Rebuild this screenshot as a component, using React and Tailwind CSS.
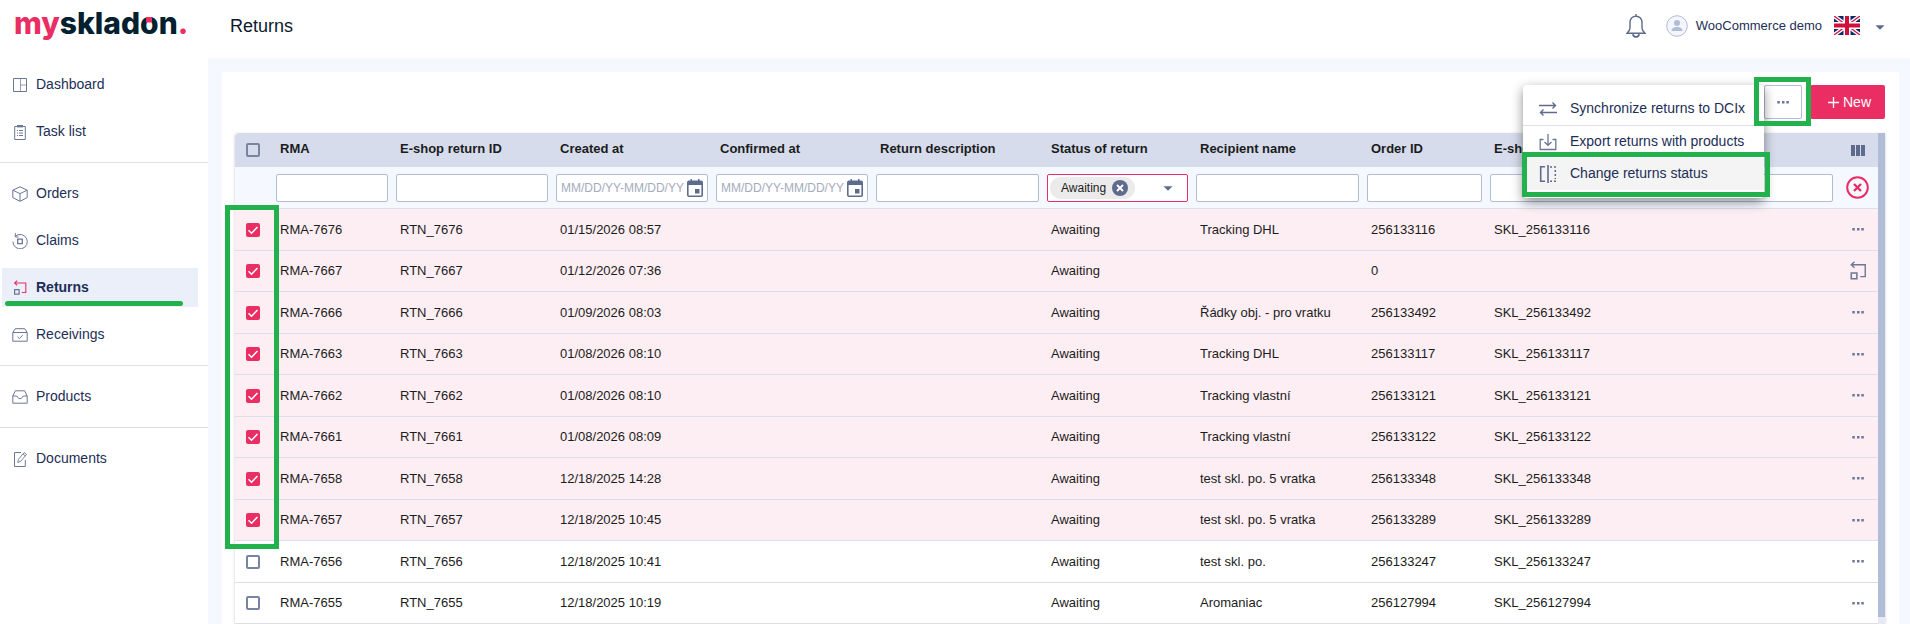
import React, { useState } from "react";

const ROWS = [
  { id: 7676, created: "01/15/2026 08:57", recipient: "Tracking DHL", order: "256133116", eshop: "SKL_256133116" },
  { id: 7667, created: "01/12/2026 07:36", recipient: "", order: "0", eshop: "", action: "return" },
  { id: 7666, created: "01/09/2026 08:03", recipient: "Řádky obj. - pro vratku", order: "256133492", eshop: "SKL_256133492" },
  { id: 7663, created: "01/08/2026 08:10", recipient: "Tracking DHL", order: "256133117", eshop: "SKL_256133117" },
  { id: 7662, created: "01/08/2026 08:10", recipient: "Tracking vlastní", order: "256133121", eshop: "SKL_256133121" },
  { id: 7661, created: "01/08/2026 08:09", recipient: "Tracking vlastní", order: "256133122", eshop: "SKL_256133122" },
  { id: 7658, created: "12/18/2025 14:28", recipient: "test skl. po. 5 vratka", order: "256133348", eshop: "SKL_256133348" },
  { id: 7657, created: "12/18/2025 10:45", recipient: "test skl. po. 5 vratka", order: "256133289", eshop: "SKL_256133289" },
  { id: 7656, created: "12/18/2025 10:41", recipient: "test skl. po.", order: "256133247", eshop: "SKL_256133247" },
  { id: 7655, created: "12/18/2025 10:19", recipient: "Aromaniac", order: "256127994", eshop: "SKL_256127994" },
];

const HEADERS = [
  "RMA",
  "E-shop return ID",
  "Created at",
  "Confirmed at",
  "Return description",
  "Status of return",
  "Recipient name",
  "Order ID",
  "E-shop order ID",
];

const Svg = ({ size = 16, className = "", children, ...rest }) => (
  <svg
    width={size}
    height={size}
    viewBox={`0 0 ${size} ${size}`}
    fill="none"
    stroke="currentColor"
    aria-hidden="true"
    className={`shrink-0 ${className}`}
    {...rest}
  >
    {children}
  </svg>
);

const DashboardIcon = () => (
  <Svg>
    <path d="M1.5 1.5h13v13h-13z" />
    <path d="M8.5 1.5v13M8.5 8h6" opacity=".7" />
  </Svg>
);

const TaskIcon = () => (
  <Svg>
    <path d="M2.7 2.5h10.6v13H2.7z" />
    <path d="M5 2.2h6" strokeWidth="2.4" />
    <path d="M5 6.5h1M7 6.5h4M5 9h1M7 9h4M5 11.5h1M7 11.5h4" />
  </Svg>
);

const OrdersIcon = () => (
  <Svg>
    <path d="M8 .8l7.2 3.4v7.4L8 15.3.8 11.6V4.2L8 .8z" strokeLinejoin="round" />
    <path d="M.8 4.2L8 7.6l7.2-3.4M8 7.6v7.7" />
  </Svg>
);

const ClaimsIcon = () => (
  <Svg>
    <path d="M3.2 3.4A7.2 7.2 0 1 1 .9 8.6" />
    <path d="M3.6.2l-.5 3.5 3.5.4" />
    <path d="M5.7 6.2h4.6v4.5H5.7z" strokeWidth="1.3" />
  </Svg>
);

const ReturnIcon = ({ size = 16, accent = "currentColor" }) => (
  <svg width={size} height={size} viewBox="0 0 16 16" fill="none" stroke="currentColor" aria-hidden="true" className="shrink-0">
    <path d="M5.2.6L2.6 3l2.6 2.4M2.8 3h11v9.5h-4" stroke={accent} strokeWidth="1.1" />
    <path d="M2.6 9.6h4.5v4.5H2.6z" strokeWidth="1.2" />
  </svg>
);

const ReceivingsIcon = () => (
  <Svg>
    <path d="M.8 5.5h14.4v8.7H.8zM.8 5.5l2.4-3.8h9.6l2.4 3.8" strokeLinejoin="round" />
    <path d="M5.5 9.7l2 1.8 3.2-3.3" />
  </Svg>
);

const ProductsIcon = () => (
  <Svg>
    <path d="M.8 7l2.6-5.2h9.2L15.2 7v7.2H.8V7z" strokeLinejoin="round" />
    <path d="M.8 7h3.4c1 0 1.3.6 1.6 1.4.4.8 1 1.3 2.2 1.3s1.800-.5 2.200-1.300c.3-.8.6-1.400 1.600-1.400h3.400" />
  </Svg>
);

const DocumentsIcon = () => (
  <Svg>
    <path d="M9 1.5H2.5v14h10.800V9" />
    <path d="M6.5 8.2l5.600-6.700 2.400 1.900-5.700 6.800-3.100 1.300.8-3.300zM11 3l2.300 1.900" strokeWidth=".9" />
  </Svg>
);

const DotsIcon = () => (
  <svg width="12" height="3" viewBox="0 0 12 3" fill="#6c7796" aria-hidden="true">
    <rect x=".3" y="0" width="2.5" height="2.5" />
    <rect x="5" y="0" width="2.5" height="2.5" />
    <rect x="9.3" y="0" width="2.5" height="2.5" />
  </svg>
);

const CaretIcon = ({ className = "" }) => (
  <svg width="10" height="5" viewBox="0 0 10 5" fill="#5f6b8c" aria-hidden="true" className={className}>
    <path d="M.5.2h9L5 4.8z" />
  </svg>
);

const CalendarIcon = () => (
  <svg width="16" height="18" viewBox="0 0 16 18" aria-hidden="true">
    <path
      d="M2 1.5h1.5V0H5v1.5h6V0h1.5v1.5H14a2 2 0 0 1 2 2V16a2 2 0 0 1-2 2H2a2 2 0 0 1-2-2V3.5a2 2 0 0 1 2-2zM1.6 6v10.4h12.8V6zM8 10h4.5v4.5H8z"
      fill="#5f6b8c"
      fillRule="evenodd"
    />
  </svg>
);

const FlagIcon = () => (
  <svg width="26" height="19" viewBox="0 0 26 19" aria-hidden="true">
    <path fill="#0a2a6c" d="M0 0h26v19H0z" />
    <path d="M0 0l26 19M26 0L0 19" stroke="#fff" strokeWidth="4" />
    <path d="M0 0l26 19M26 0L0 19" stroke="#d0103a" strokeWidth="1.3" />
    <path d="M13 0v19M0 9.5h26" stroke="#fff" strokeWidth="7" />
    <path d="M13 0v19M0 9.5h26" stroke="#d0103a" strokeWidth="4" />
  </svg>
);

const Logo = () => (
  <svg width="180" height="44" viewBox="0 0 180 44" role="img" aria-label="myskladon">
    <text x="0" y="34" fontFamily="Inter, sans-serif" fontWeight="800" fontSize="30" fill="#03202f">
      <tspan fill="#ea2e63">my</tspan>skladon<tspan fill="#ea2e63">.</tspan>
    </text>
    <path d="M132 17h6v5.5h-6z" fill="#ea2e63" />
  </svg>
);

const MENU_GROUPS = [
  [
    { label: "Dashboard", Icon: DashboardIcon },
    { label: "Task list", Icon: TaskIcon },
  ],
  [
    { label: "Orders", Icon: OrdersIcon },
    { label: "Claims", Icon: ClaimsIcon },
    { label: "Returns", Icon: () => <ReturnIcon accent="#ea2e63" />, active: true },
    { label: "Receivings", Icon: ReceivingsIcon },
  ],
  [{ label: "Products", Icon: ProductsIcon }],
  [{ label: "Documents", Icon: DocumentsIcon }],
];

const Sidebar = () => (
  <aside className="w-52 shrink-0">
    <a href="#" className="block h-[58px] pl-[14px]">
      <Logo />
    </a>
    <nav className="-mt-1">
      {MENU_GROUPS.map((group, i) => (
        <ul key={i} className="flex flex-col gap-2 py-[11px] border-b border-[#dcdfe3] last:border-b-0">
          {group.map(({ label, Icon, active }) => (
            <li key={label} className="relative ml-[2px] mr-[10px]">
              <a
                href="#"
                className={`flex items-center gap-2 h-[39px] pl-[10px] text-sm text-[#1d2e57] ${
                  active ? "bg-[#ebeff9] font-bold" : ""
                }`}
              >
                <span className="text-[#6c7796]">
                  <Icon />
                </span>
                <span className="pb-[2px]">{label}</span>
              </a>
              {active && (
                <span className="absolute left-[3px] right-[15px] bottom-px h-[5px] rounded-full bg-[#22b14c]" />
              )}
            </li>
          ))}
        </ul>
      ))}
    </nav>
  </aside>
);

const TopBar = () => (
  <header className="flex items-center justify-between h-[58px] pb-[7px] pl-[22px] pr-[25px] shrink-0">
    <h1 className="text-lg text-[#0b1a2e]">Returns</h1>
    <div className="flex items-center">
      <button type="button" aria-label="Notifications" className="mr-5 text-[#5f6b8c]">
        <svg width="20" height="24" viewBox="0 0 20 24" fill="none" stroke="currentColor" strokeWidth="1.4" aria-hidden="true">
          <path d="M10 2.2c-3.8 0-6 2.8-6 6.3v5.6c0 1.8-1.3 3.6-3 5.2h18c-1.7-1.6-3-3.4-3-5.2V8.5c0-3.5-2.2-6.3-6-6.3zM10 0v2.2" />
          <path d="M6.8 20.2c.5 1.8 1.6 2.7 3.2 2.7s2.7-.9 3.2-2.7" strokeWidth="1.8" />
        </svg>
      </button>
      <svg width="22" height="22" viewBox="0 0 22 22" aria-hidden="true">
        <circle cx="11" cy="11" r="10.3" fill="#f4f6fb" stroke="#b1bdd7" />
        <circle cx="11" cy="8" r="3" fill="#b1bdd7" />
        <path d="M5.5 16c0-2.7 2.6-4 5.5-4s5.5 1.3 5.5 4z" fill="#b1bdd7" />
      </svg>
      <span className="ml-2 text-[13px] text-[#1d2e57]">WooCommerce demo</span>
      <button type="button" aria-label="Language" className="flex items-center gap-[15px] ml-3">
        <FlagIcon />
        <CaretIcon className="mt-1" />
      </button>
    </div>
  </header>
);

const ActionMenu = () => (
  <ul className="absolute right-full top-0 z-20 w-[241px] py-2 rounded-sm bg-white text-sm text-[#1d2e57] shadow-[0_4px_12px_rgba(0,0,0,0.45)]">
    <li className="border-b border-[#dcdfe3]">
      <button type="button" className="flex items-center w-full h-8 pl-4 gap-[13px] whitespace-nowrap">
        <Svg size={18} className="text-[#5f6b8c]">
          <path d="M0 5.5h16.5M13.5 2.5l3 3-3 3M18 12.5H1.5M4.5 9.5l-3 3 3 3" strokeWidth="1.4" />
        </Svg>
        <span className="pb-[2px]">Synchronize returns to DCIx</span>
      </button>
    </li>
    <li>
      <button type="button" className="flex items-center w-full h-8 pl-4 gap-[13px] whitespace-nowrap">
        <Svg size={18} className="text-[#6c7796]">
          <path d="M4.5 6.5H1.2v10h15.6v-10h-3.3M9 1v11M5.5 9L9 12.3 12.5 9" strokeWidth="1.3" />
        </Svg>
        <span className="pb-[2px]">Export returns with products</span>
      </button>
    </li>
    <li className="relative">
      <button type="button" className="flex items-center w-full h-8 pl-4 gap-[13px] whitespace-nowrap bg-[#f4f4f4]">
        <Svg size={18} className="text-[#5f6b8c]">
          <path d="M6 1.7H1.7v14.6H6" strokeWidth="1.6" />
          <path d="M9 0v18" strokeWidth="1.6" />
          <path d="M11 2h6M16.3 5v9M11 16.3h6" strokeWidth="1.5" strokeDasharray="2 2" />
        </Svg>
        <span className="pb-[2px]">Change returns status</span>
      </button>
      <span className="absolute -left-px -right-[6px] -top-[6px] h-[45px] border-5 border-[#22b14c] pointer-events-none" />
    </li>
  </ul>
);

const Checkbox = ({ label, checked, onChange }) => (
  <label className="grid w-[14px] h-[14px] ml-[11px]">
    <input
      type="checkbox"
      aria-label={label}
      checked={checked}
      onChange={onChange}
      className="peer col-start-1 row-start-1 appearance-none w-[14px] h-[14px] rounded-[2px] border-2 border-[#7984a2] checked:border-[#ea2e63] checked:bg-[#ea2e63]"
    />
    <svg
      viewBox="0 0 14 14"
      fill="none"
      stroke="#fff"
      strokeWidth="1.5"
      aria-hidden="true"
      className="col-start-1 row-start-1 w-[14px] h-[14px] invisible peer-checked:visible pointer-events-none"
    >
      <path d="M2.5 7.2l3 3 6-6.2" />
    </svg>
  </label>
);

const TextFilter = ({ label }) => (
  <input
    type="text"
    aria-label={label}
    className="block w-full h-7 px-1 rounded-[2px] border border-[#b1bdd7] bg-white"
  />
);

const DateFilter = ({ label }) => (
  <div className="flex items-center h-7 pr-1 rounded-[2px] border border-[#b1bdd7] bg-white">
    <input
      type="text"
      aria-label={label}
      placeholder="MM/DD/YY-MM/DD/YY"
      className="min-w-0 flex-1 pl-1 text-xs placeholder:text-[#a3abbe] outline-none"
    />
    <button type="button" aria-label={`${label} calendar`}>
      <CalendarIcon />
    </button>
  </div>
);

const StatusFilter = () => (
  <div className="flex items-center h-7 pl-[2px] rounded-[2px] border border-[#ea2e63] bg-white">
    <span className="flex items-center gap-[6px] h-[22px] pl-[11px] pr-[7px] rounded-full bg-[#ebebeb] text-xs">
      Awaiting
      <button type="button" aria-label="Remove Awaiting">
        <svg width="16" height="16" viewBox="0 0 16 16" aria-hidden="true">
          <circle cx="8" cy="8" r="8" fill="#5f6b8c" />
          <path d="M5 5l6 6M11 5l-6 6" stroke="#fff" strokeWidth="1.8" />
        </svg>
      </button>
    </span>
    <span className="relative flex-1 min-w-0">
      <select aria-label="Status of return" className="block w-full h-6 appearance-none outline-none">
        <option value=""></option>
      </select>
      <CaretIcon className="absolute right-[14px] top-[10px] pointer-events-none" />
    </span>
  </div>
);

const ReturnsTable = () => {
  const [selected, setSelected] = useState([7676, 7667, 7666, 7663, 7662, 7661, 7658, 7657]);

  const toggle = (id) =>
    setSelected((prev) => (prev.includes(id) ? prev.filter((x) => x !== id) : [...prev, id]));

  const allSelected = selected.length === ROWS.length;

  return (
    <div className="relative flex shadow-[0_1px_3px_rgba(0,0,0,0.2)]">
      <div className="flex-1 min-w-0">
        <table className="w-full table-fixed border-separate border-spacing-0 text-[13px] text-[#1b1c20]">
          <colgroup>
            <col className="w-[37px]" />
            <col className="w-[120px]" />
            <col className="w-[160px]" />
            <col className="w-[160px]" />
            <col className="w-[160px]" />
            <col className="w-[171px]" />
            <col className="w-[149px]" />
            <col className="w-[171px]" />
            <col className="w-[123px]" />
            <col />
            <col className="w-[41px]" />
          </colgroup>
          <thead>
            <tr className="h-[34px] [&>th]:bg-[#d6dceb]">
              <th className="rounded-tl">
                <Checkbox
                  label="Select all"
                  checked={allSelected}
                  onChange={() => setSelected(allSelected ? [] : ROWS.map((r) => r.id))}
                />
              </th>
              {HEADERS.map((h) => (
                <th key={h} className="pl-2 pb-[2px] text-left font-bold whitespace-nowrap">
                  {h}
                </th>
              ))}
              <th>
                <button type="button" aria-label="Columns" className="block mx-auto">
                  <svg width="14" height="11" viewBox="0 0 14 11" fill="#5f6b8c" aria-hidden="true">
                    <path d="M0 0h4v11H0zM5 0h4v11H5zM10 0h4v11h-4z" />
                  </svg>
                </button>
              </th>
            </tr>
            <tr className="h-[42px] bg-[#f5f8ff] [&>td]:border-b [&>td]:border-[#dcdfe3]">
              <td></td>
              <td className="px-1"><TextFilter label="RMA" /></td>
              <td className="px-1"><TextFilter label="E-shop return ID" /></td>
              <td className="px-1"><DateFilter label="Created at" /></td>
              <td className="px-1"><DateFilter label="Confirmed at" /></td>
              <td className="px-1"><TextFilter label="Return description" /></td>
              <td className="px-1"><StatusFilter /></td>
              <td className="px-1"><TextFilter label="Recipient name" /></td>
              <td className="px-1"><TextFilter label="Order ID" /></td>
              <td className="px-1"><TextFilter label="E-shop order ID" /></td>
              <td>
                <button type="button" aria-label="Clear filters" className="block mx-auto">
                  <svg width="23" height="23" viewBox="0 0 23 23" fill="none" stroke="#ea2e63" strokeWidth="2" aria-hidden="true">
                    <circle cx="11.5" cy="11.5" r="10.3" />
                    <path d="M8 8l7 7M15 8l-7 7" strokeWidth="2.4" />
                  </svg>
                </button>
              </td>
            </tr>
          </thead>
          <tbody>
            {ROWS.map((row) => (
              <tr
                key={row.id}
                className={`odd:h-[42px] even:h-[41px] [&>td]:border-b [&>td]:border-[#dcdfe3] ${
                  selected.includes(row.id) ? "bg-[#fdeef3]" : "bg-white"
                }`}
              >
                <td>
                  <Checkbox
                    label={`RMA-${row.id}`}
                    checked={selected.includes(row.id)}
                    onChange={() => toggle(row.id)}
                  />
                </td>
                <td className="pl-2">RMA-{row.id}</td>
                <td className="pl-2">RTN_{row.id}</td>
                <td className="pl-2">{row.created}</td>
                <td className="pl-2"></td>
                <td className="pl-2"></td>
                <td className="pl-2">Awaiting</td>
                <td className="pl-2">{row.recipient}</td>
                <td className="pl-2">{row.order}</td>
                <td className="pl-2">{row.eshop}</td>
                <td>
                  <button type="button" aria-label="Row actions" className="block mx-auto text-[#6c7796]">
                    {row.action === "return" ? <ReturnIcon size={20} /> : <DotsIcon />}
                  </button>
                </td>
              </tr>
            ))}
          </tbody>
        </table>
      </div>
      {/* scrollbar */}
      <div className="w-[7px] shrink-0 pb-[7px] bg-[#e6eaf4]">
        <div className="h-full bg-[#b1bdd7]" />
      </div>
      <span className="absolute -left-[10px] top-[72px] w-[54px] h-[344px] border-5 border-[#22b14c] pointer-events-none" />
    </div>
  );
};

export default function App() {
  return (
    <div className="flex h-screen overflow-hidden bg-white font-['Liberation_Sans',Arial,sans-serif]">
      <Sidebar />
      <div className="flex flex-col flex-1 min-w-0">
        <TopBar />
        <main className="flex-1 min-h-0 overflow-hidden bg-[#f5f8ff] pt-[14px] pl-[14px] pr-[11px]">
          <section className="bg-white pt-[13px] pl-[13px] pr-[14px]">
            <div className="flex justify-end gap-2 mb-[14px]">
              <div className="relative">
                <ActionMenu />
                <button
                  type="button"
                  aria-label="More actions"
                  className="flex items-center justify-center w-[38px] h-[34px] rounded-[2px] border border-[#b1bdd7] bg-white"
                >
                  <DotsIcon />
                </button>
                <span className="absolute -left-[10px] -right-[9px] -top-2 -bottom-[7px] z-30 border-5 border-[#22b14c] pointer-events-none" />
              </div>
              <button
                type="button"
                className="flex items-center gap-1 h-[34px] pl-[18px] pr-[14px] rounded-[2px] bg-[#ea2e63] text-sm text-white"
              >
                <svg width="11" height="11" viewBox="0 0 11 11" stroke="#fff" strokeWidth="1.3" aria-hidden="true">
                  <path d="M5.5 0v11M0 5.5h11" />
                </svg>
                New
              </button>
            </div>
            <ReturnsTable />
          </section>
        </main>
      </div>
    </div>
  );
}
